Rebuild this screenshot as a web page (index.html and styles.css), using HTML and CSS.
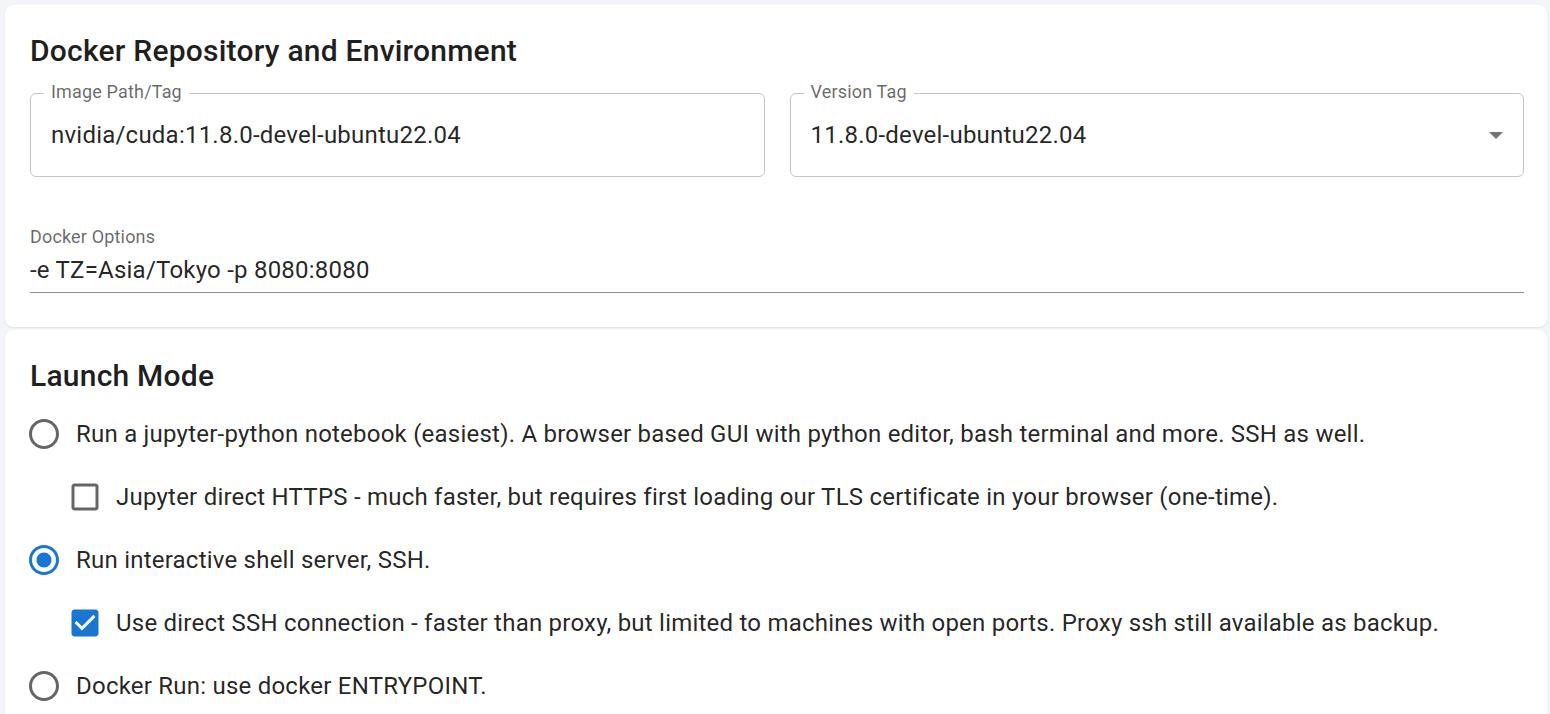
FILE: index.html
```html
<!DOCTYPE html>
<html lang="en">
<head>
<meta charset="utf-8">
<title>Docker Settings</title>
<link rel="stylesheet" href="styles.css">
</head>
<body>
<main class="page">
  <section class="card card-docker">
    <h2 class="card-title">Docker Repository and Environment</h2>
    <div class="field-row">
      <div class="outlined">
        <span class="float-label">Image Path/Tag</span>
        <div class="outlined-value">nvidia/cuda:11.8.0-devel-ubuntu22.04</div>
      </div>
      <div class="outlined select">
        <span class="float-label">Version Tag</span>
        <div class="outlined-value">11.8.0-devel-ubuntu22.04</div>
        <svg class="select-arrow" viewBox="0 0 14 7" width="14" height="7"><path d="M0 0h14L7 7z" fill="#757575"/></svg>
      </div>
    </div>
    <div class="standard-field">
      <div class="std-label">Docker Options</div>
      <div class="std-input">-e TZ=Asia/Tokyo -p 8080:8080</div>
    </div>
  </section>

  <section class="card card-launch">
    <h2 class="card-title">Launch Mode</h2>
    <div class="option">
      <span class="ctl"><svg viewBox="0 0 24 24" class="ico off"><path d="M12 2C6.48 2 2 6.480 2 12s4.48 10 10 10 10-4.48 10-10S17.52 2 12 2zm0 18c-4.42 0-8-3.58-8-8s3.58-8 8-8 8 3.58 8 8-3.58 8-8 8z"/></svg></span>
      <span class="opt-text">Run a jupyter-python notebook (easiest). A browser based GUI with python editor, bash terminal and more. SSH as well.</span>
    </div>
    <div class="option sub">
      <span class="ctl"><svg viewBox="0 0 24 24" class="ico off"><path d="M19 5v14H5V5h14m0-2H5c-1.1 0-2 .9-2 2v14c0 1.1.9 2 2 2h14c1.1 0 2-.9 2-2V5c0-1.1-.9-2-2-2z"/></svg></span>
      <span class="opt-text">Jupyter direct HTTPS - much faster, but requires first loading our TLS certificate in your browser (one-time).</span>
    </div>
    <div class="option">
      <span class="ctl"><svg viewBox="0 0 24 24" class="ico on"><path d="M12 7c-2.76 0-5 2.24-5 5s2.24 5 5 5 5-2.24 5-5-2.24-5-5-5zm0-5C6.48 2 2 6.48 2 12s4.48 10 10 10 10-4.48 10-10S17.52 2 12 2zm0 18c-4.42 0-8-3.58-8-8s3.58-8 8-8 8 3.58 8 8-3.58 8-8 8z"/></svg></span>
      <span class="opt-text">Run interactive shell server, SSH.</span>
    </div>
    <div class="option sub">
      <span class="ctl"><svg viewBox="0 0 24 24" class="ico on"><path d="M19 3H5c-1.11 0-2 .9-2 2v14c0 1.1.89 2 2 2h14c1.11 0 2-.9 2-2V5c0-1.1-.89-2-2-2zm-9 14l-5-5 1.41-1.41L10 14.17l7.59-7.59L19 8l-9 9z"/></svg></span>
      <span class="opt-text">Use direct SSH connection - faster than proxy, but limited to machines with open ports. Proxy ssh still available as backup.</span>
    </div>
    <div class="option">
      <span class="ctl"><svg viewBox="0 0 24 24" class="ico off"><path d="M12 2C6.48 2 2 6.48 2 12s4.48 10 10 10 10-4.48 10-10S17.52 2 12 2zm0 18c-4.42 0-8-3.58-8-8s3.58-8 8-8 8 3.58 8 8-3.58 8-8 8z"/></svg></span>
      <span class="opt-text">Docker Run: use docker ENTRYPOINT.</span>
    </div>
  </section>
</main>
</body>
</html>
```
FILE: styles.css
```css
html, body {
  margin: 0;
  padding: 0;
  background: #f4f5f8;
  font-family: Roboto, "Liberation Sans", sans-serif;
  color: rgba(0, 0, 0, 0.87);
  overflow: hidden;
}

.page {
  padding: 5px 3px 0 5px;
  display: flex;
  flex-direction: column;
  gap: 3px;
}

.card {
  background: #fff;
  border-radius: 8px;
  box-shadow: 0 1px 2px rgba(0, 0, 0, 0.07), 0 0 1px rgba(0, 0, 0, 0.05);
  padding: 30px 23px 34px 25px;
}

.card-launch {
  padding-bottom: 40px;
}

.card-title {
  margin: 0;
  font-size: 30px;
  line-height: 32px;
  font-weight: 500;
  letter-spacing: 0.0075em;
  color: #1f1f1f;
}

.field-row {
  margin-top: 26px;
  display: grid;
  grid-template-columns: 1fr 1fr;
  gap: 25px;
}

.outlined {
  position: relative;
  height: 84px;
  box-sizing: border-box;
  border: 1px solid #c4c4c4;
  border-radius: 6px;
  display: flex;
  align-items: center;
  padding: 0 20px;
}

.float-label {
  position: absolute;
  top: -12px;
  left: 13px;
  padding: 0 7px;
  background: #fff;
  font-size: 18px;
  line-height: 20px;
  letter-spacing: 0.00938em;
  color: rgba(0, 0, 0, 0.6);
}

.outlined-value {
  font-size: 24px;
  line-height: 28px;
  letter-spacing: 0.00938em;
}

.select-arrow {
  position: absolute;
  right: 20px;
  top: 38px;
}

.standard-field {
  margin-top: 50px;
}

.std-label {
  font-size: 18px;
  line-height: 20px;
  letter-spacing: 0.00938em;
  color: rgba(0, 0, 0, 0.6);
}

.std-input {
  margin-top: 9px;
  font-size: 24px;
  line-height: 28px;
  letter-spacing: 0.00938em;
  padding-bottom: 8px;
  border-bottom: 1px solid #8c8c8c;
}

.option {
  display: flex;
  align-items: center;
  height: 63px;
  gap: 14px;
}

.card-title + .option {
  margin-top: 10px;
}

.option.sub {
  padding-left: 41px;
  gap: 13px;
}

.ctl {
  width: 36px;
  height: 36px;
  margin-left: -4px;
  flex: none;
  display: flex;
}

.ico {
  width: 36px;
  height: 36px;
}

.ico.off { fill: #666; }
.ico.on { fill: #1976d2; }

.opt-text {
  font-size: 24px;
  line-height: 28px;
  letter-spacing: 0.00938em;
}
```
